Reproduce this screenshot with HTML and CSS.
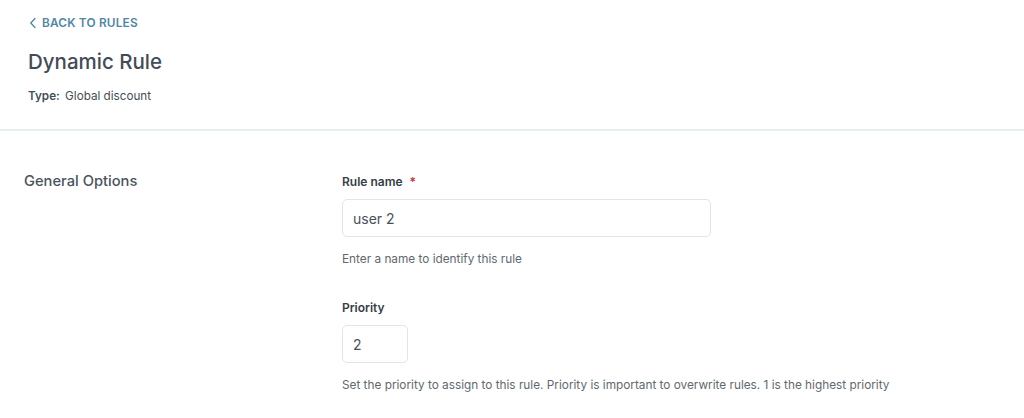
FILE: index.html
```html
<!DOCTYPE html>
<html lang="en">
<head>
<meta charset="utf-8">
<title>Dynamic Rule</title>
<link rel="stylesheet" href="styles.css">
</head>
<body>
<header class="page-header">
  <a class="back-link" href="#">
    <svg class="back-icon" width="8" height="12" viewBox="0 0 8 12" aria-hidden="true"><path d="M6 1.5 L1.8 6 L6 10.5" fill="none" stroke="currentColor" stroke-width="1.3" stroke-linecap="round" stroke-linejoin="round"/></svg>
    <span>BACK TO RULES</span>
  </a>
  <h1 class="title">Dynamic Rule</h1>
  <p class="type"><strong>Type:</strong> Global discount</p>
</header>
<main class="section">
  <h2 class="section-title">General Options</h2>
  <div class="fields">
    <div class="field">
      <label class="label">Rule name <span class="req">*</span></label>
      <div class="input wide">user 2</div>
      <p class="help">Enter a name to identify this rule</p>
    </div>
    <div class="field">
      <label class="label">Priority</label>
      <div class="input narrow">2</div>
      <p class="help">Set the priority to assign to this rule. Priority is important to overwrite rules. 1 is the highest priority</p>
    </div>
  </div>
</main>
</body>
</html>
```
FILE: styles.css
```css
html, body {
  margin: 0;
  padding: 0;
  background: #ffffff;
  font-family: Inter, "Open Sans", "Liberation Sans", sans-serif;
  color: #434c55;
}
.page-header {
  padding: 15px 28px 0 28px;
  height: 114px;
  border-bottom: 2px solid #e6eeee;
}
.back-link {
  display: flex;
  align-items: center;
  gap: 5px;
  color: #4f86a6;
  text-decoration: none;
  font-size: 11.8px;
  font-weight: 600;
  letter-spacing: 0.2px;
  height: 15px;
}
.back-icon {
  margin-left: 1px;
}
.title {
  margin: 18px 0 0 0;
  font-size: 20.5px;
  font-weight: 500;
  line-height: 28px;
  color: #434c56;
}
.type {
  margin: 12px 0 0 0;
  font-size: 11.7px;
  line-height: 16px;
  color: #444d56;
}
.type strong {
  font-weight: 600;
  margin-right: 2px;
}
.section {
  display: flex;
  padding: 40px 24px 0 24px;
}
.section-title {
  margin: 0;
  width: 318px;
  font-size: 14.7px;
  font-weight: 500;
  line-height: 20px;
  color: #4a535c;
}
.fields {
  display: flex;
  flex-direction: column;
  gap: 33px;
  padding-top: 3px;
}
.label {
  display: block;
  font-size: 12px;
  font-weight: 600;
  line-height: 16px;
  color: #363e46;
}
.req {
  color: #c8323a;
  margin-left: 4px;
}
.input {
  box-sizing: border-box;
  margin-top: 9px;
  height: 38px;
  border: 1px solid #dfe5e8;
  border-radius: 5px;
  padding: 0 10px;
  display: flex;
  align-items: center;
  font-size: 14px;
  color: #4a5158;
}
.wide { width: 369px; }
.narrow { width: 66px; }
.help {
  margin: 14px 0 0 0;
  font-size: 11.8px;
  line-height: 16px;
  color: #5f6870;
}
```
